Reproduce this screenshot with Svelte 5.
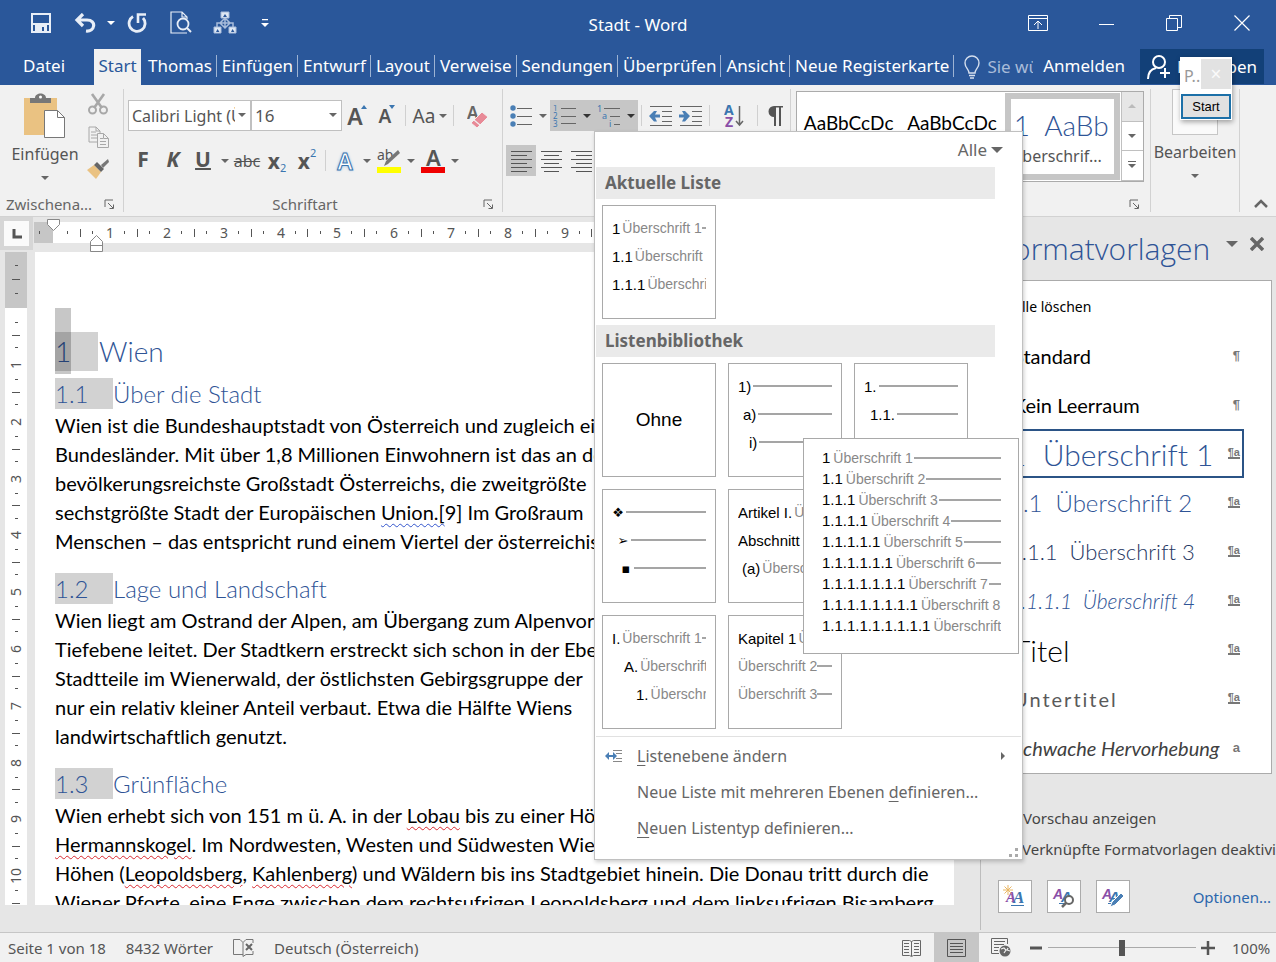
<script lang="ts">
  type Row = { num?: string; text?: string; indent?: number; glyph?: boolean };

  const tabs = ['Thomas', 'Einfügen', 'Entwurf', 'Layout', 'Verweise', 'Sendungen', 'Überprüfen', 'Ansicht', 'Neue Registerkarte'];

  const current: Row[] = [
    { num: '1', text: 'Überschrift 1' },
    { num: '1.1', text: 'Überschrift 2' },
    { num: '1.1.1', text: 'Überschrift 3' }
  ];

  const library: Row[][] = [
    [],
    [{ num: '1)' }, { num: 'a)', indent: 5 }, { num: 'i)', indent: 11 }],
    [{ num: '1.' }, { num: '1.1.', indent: 6 }, { num: '1.1.1.', indent: 14 }],
    [
      { num: '❖', glyph: true },
      { num: '➢', glyph: true, indent: 5 },
      { num: '▪', glyph: true, indent: 8 }
    ],
    [
      { num: 'Artikel I.', text: 'Überschrift 1' },
      { num: 'Abschnitt 1.01', text: 'Überschrift 2' },
      { num: '(a)', text: 'Überschrift 3', indent: 4 }
    ],
    [],
    [
      { num: 'I.', text: 'Überschrift 1' },
      { num: 'A.', text: 'Überschrift 2', indent: 12 },
      { num: '1.', text: 'Überschrift 3', indent: 24 }
    ],
    [{ num: 'Kapitel 1', text: 'Überschrift 1' }, { text: 'Überschrift 2' }, { text: 'Überschrift 3' }]
  ];

  const preview: Row[] = Array.from({ length: 9 }, (_, i) => ({
    num: Array(i + 1).fill('1').join('.'),
    text: `Überschrift ${i + 1}`
  }));

  const styles = [
    { name: 'Alle löschen', kind: 'clear', mark: '' },
    { name: 'Standard', kind: 'normal', mark: '¶' },
    { name: 'Kein Leerraum', kind: 'normal', mark: '¶' },
    { name: '1  Überschrift 1', kind: 'h1', mark: '¶a' },
    { name: '1.1  Überschrift 2', kind: 'h2', mark: '¶a' },
    { name: '1.1.1  Überschrift 3', kind: 'h3', mark: '¶a' },
    { name: '1.1.1.1  Überschrift 4', kind: 'h4', mark: '¶a' },
    { name: 'Titel', kind: 'title', mark: '¶a' },
    { name: 'Untertitel', kind: 'subtitle', mark: '¶a' },
    { name: 'Schwache Hervorhebung', kind: 'weak', mark: 'a' }
  ];

  const columns = Array.from({ length: 20 }, (_, i) => i + 1);
</script>

{#snippet rows(list: Row[])}
  {#each list as row}
    <span class="row" style="padding-left: {row.indent ?? 0}px">
      {#if row.num}<span class="num" class:glyph={row.glyph}>{row.num}</span>{/if}
      {#if row.text}<span class="lvl">{row.text}</span>{/if}
      <span class="rule"></span>
    </span>
  {/each}
{/snippet}

{#snippet launcher(label: string)}
  <button class="launcher" aria-label={label}>
    <svg width="11" height="11" viewBox="0 0 11 11"><path d="M1 8V1h8M4 4l5 5M9.500 5.500v4h-4" fill="none" stroke="#666" /></svg>
  </button>
{/snippet}

<div class="word">
  <header class="top">
    <div class="titlebar">
      <div class="quick">
        <button aria-label="Speichern">
          <svg width="20" height="20" viewBox="0 0 20 20"><path d="M1 1h18v18H1z" fill="none" stroke="#e8eef7" stroke-width="2" /><path d="M4 12h12v7h-3v-5h-2v5H4z" fill="#e8eef7" /><path d="M2 10h16v2H2z" fill="#e8eef7" /></svg>
        </button>
        <button aria-label="Rückgängig">
          <svg width="22" height="20" viewBox="0 0 22 20"><path d="M9 1L3 7l6 6M3 7h10c10 0 8 12-1 11" fill="none" stroke="#e8eef7" stroke-width="3.200" /></svg>
        </button>
        <button class="slim" aria-label="Rückgängig-Liste"><i class="caret light"></i></button>
        <button aria-label="Wiederholen">
          <svg width="20" height="20" viewBox="0 0 20 20"><path d="M6 3.500A8 8 0 1 0 16 5" fill="none" stroke="#e8eef7" stroke-width="2.800" /><path d="M11 10V1.500h8" fill="none" stroke="#e8eef7" stroke-width="2.600" /></svg>
        </button>
        <button aria-label="Seitenansicht">
          <svg width="22" height="23" viewBox="0 0 22 23" fill="none" stroke="#e8eef7"><path d="M17 22H1V1h11l5 5v2M12 1v5h5" stroke-width="1.200" /><circle cx="13" cy="13" r="5.500" stroke-width="1.800" /><path d="M17 17l4 4" stroke-width="2" /></svg>
        </button>
        <button aria-label="Organigramm">
          <svg width="24" height="24" viewBox="0 0 24 24" fill="none" stroke="#a9bddb"><path d="M12 7l5 5-5 5-5-5zM12 7v10M7 12h10M7 12H4v4M17 12h3v4" stroke-width="1.500" /><path d="M8 1h8v6H8zM1 16h7v6H1zM16 16h7v6h-7z" fill="#dfe8f4" /><path d="M10 6l2-3 2 3zM3 21l1.500-3 2 3zM18 21l1.500-3 2 3z" fill="#2a579a" stroke="none" /></svg>
        </button>
        <button class="tight" aria-label="Symbolleiste anpassen">
          <svg width="8" height="8" viewBox="0 0 8 8"><path d="M1 0h6v1.300H1zM0 4h8L4 8z" fill="#fff" /></svg>
        </button>
      </div>
      <div class="title">Stadt - Word</div>
      <div class="window">
        <button aria-label="Menüband-Anzeigeoptionen">
          <svg width="20" height="16" viewBox="0 0 20 16" fill="none" stroke="#fff"><path d="M.500.500h19v15H.500zM.500 3.500h19M10 14V6M6 10l4-4 4 4" /></svg>
        </button>
        <button aria-label="Minimieren"><svg width="15" height="16" viewBox="0 0 15 16"><path d="M0 9.500h15" stroke="#fff" /></svg></button>
        <button aria-label="Verkleinern">
          <svg width="16" height="16" viewBox="0 0 16 16" fill="none" stroke="#fff"><path d="M.500 3.500h11v12H.500zM3.500 3.500v-3h12v12h-4" /></svg>
        </button>
        <button aria-label="Schließen"><svg width="16" height="16" viewBox="0 0 16 16"><path d="M.500.500l15 15M15.500.500l-15 15" stroke="#fff" stroke-width="1.200" /></svg></button>
      </div>
    </div>

    <nav class="tabs">
      <button class="file">Datei</button>
      <button class="active">Start</button>
      {#each tabs as tab}
        <button class="tab">{tab}</button>
      {/each}
      <label class="tell">
        <svg width="18" height="24" viewBox="0 0 18 24" fill="none" stroke="#d5dfee" stroke-width="1.400"><path d="M6 18c0-4-4-5-4-10a7 7 0 0 1 14 0c0 5-4 6-4 10zM6 20.500h6M7 23h4" /></svg>
        <input aria-label="Was möchten Sie tun?" placeholder="Sie wünschen" />
      </label>
      <button class="login">Anmelden</button>
      <button class="share">
        <svg width="24" height="24" viewBox="0 0 24 24" fill="none" stroke="#fff" stroke-width="2"><circle cx="12" cy="7" r="6" /><path d="M1 24c0-6 3-10 8-11M18 13v10M13 18h10" /></svg>
        Freigeben
      </button>
    </nav>
  </header>

  <section class="ribbon">
    <div class="group">
      <div class="body clip">
        <button class="big">
          <svg width="44" height="46" viewBox="0 0 44 46"><path d="M1 5h33v37H1z" fill="#eac282" /><path d="M7 10V5h5c0-6 11-6 11 0h5v5z" fill="#777" /><circle cx="17.500" cy="4" r="1.500" fill="#fff" /><path d="M21.500 17.500h13l7 7v20h-20z" fill="#fff" stroke="#777" /><path d="M34.500 17.500v7h7" fill="none" stroke="#777" /></svg>
          <span>Einfügen</span>
          <i class="caret"></i>
        </button>
        <div class="stack">
          <button aria-label="Ausschneiden">
            <svg width="20" height="22" viewBox="0 0 20 22" fill="none" stroke="#a8a8a8" stroke-width="2"><path d="M4 1l10 14M16 1L6 15" stroke-width="2.600" /><circle cx="4.500" cy="17" r="3.500" /><circle cx="15.500" cy="17" r="3.500" /></svg>
          </button>
          <button aria-label="Kopieren">
            <svg width="21" height="22" viewBox="0 0 21 22" fill="#f1f1f1" stroke="#a8a8a8"><path d="M1 1h7l4 4v11H1zM8 1v4h4M3 6h5M3 9h6M3 12h6" /><path d="M9.500 7.500h6l5 5v9h-11zM15.500 7.500v5h5M12 12.500h3M12 15.500h6M12 18.500h6" /></svg>
          </button>
          <button aria-label="Format übertragen">
            <svg width="22" height="20" viewBox="0 0 22 20"><path d="M0 11l7-5 7 7-5 7z" fill="#eac282" /><path d="M7 6l3-3 7 7-3 3z" fill="#666" /><path d="M14 6l7-6 1 3-6 6z" fill="#777" /></svg>
          </button>
        </div>
      </div>
      <div class="caption"><span>Zwischena...</span>{@render launcher('Zwischenablage')}</div>
    </div>

    <div class="group">
      <div class="body">
        <div class="line">
          <span class="pick family">
            <select aria-label="Schriftart"><option>Calibri Light (Überschriften)</option></select>
            <i class="caret"></i>
          </span>
          <span class="pick size">
            <select aria-label="Schriftgrad"><option>16</option></select>
            <i class="caret"></i>
          </span>
          <button class="grow" aria-label="Schrift vergrößern">A<i class="up"></i></button>
          <button class="shrink" aria-label="Schrift verkleinern">A<i class="down"></i></button>
          <span class="sep"></span>
          <button class="wide case">Aa<i class="caret"></i></button>
          <span class="sep"></span>
          <button class="wide" aria-label="Formatierung löschen">
            <svg width="22" height="24" viewBox="0 0 22 24"><text x="0" y="15" font-size="17" fill="#666" font-family="Noto Sans" font-weight="600">A</text><path d="M4 19l11-11 6 5-11 11z" fill="#e88a97" stroke="#f1f1f1" /><path d="M7 16l6 5" stroke="#f1f1f1" stroke-width="1.200" /></svg>
          </button>
        </div>
        <div class="line">
          <button class="fmt"><b>F</b></button>
          <button class="fmt"><b><em>K</em></b></button>
          <button class="fmt"><b><u>U</u></b></button>
          <button class="drop" aria-label="Unterstreichung"><i class="caret"></i></button>
          <button class="strike"><s>abc</s></button>
          <button class="script"><b>x</b><sub>2</sub></button>
          <button class="script"><b>x</b><sup>2</sup></button>
          <span class="sep"></span>
          <button class="effect">A</button>
          <button class="drop" aria-label="Texteffekte"><i class="caret"></i></button>
          <button aria-label="Texthervorhebungsfarbe">
            <svg width="26" height="28" viewBox="0 0 26 28"><text x="1" y="13" font-size="14" fill="#555" font-family="Noto Sans">ab</text><path d="M8 19l2-5 12-11 2 3-12 11z" fill="#777" /><path d="M1 20h24v6H1z" fill="#ff0" /></svg>
          </button>
          <button class="drop" aria-label="Hervorhebungsfarben"><i class="caret"></i></button>
          <button aria-label="Schriftfarbe">
            <svg width="26" height="28" viewBox="0 0 26 28"><text x="6" y="19" font-size="22" fill="#555" font-family="Noto Sans" font-weight="600">A</text><path d="M1 20h24v6H1z" fill="#f00000" /></svg>
          </button>
          <button class="drop" aria-label="Schriftfarben"><i class="caret"></i></button>
        </div>
      </div>
      <div class="caption mid"><span>Schriftart</span>{@render launcher('Schriftart')}</div>
    </div>

    <div class="group para">
      <div class="body">
        <div class="line">
          <button aria-label="Aufzählungszeichen">
            <svg width="22" height="22" viewBox="0 0 22 22"><g fill="#4a7fb5"><circle cx="3" cy="3" r="2.700" /><circle cx="3" cy="11" r="2.700" /><circle cx="3" cy="19" r="2.700" /></g><path d="M7 3.500h15M7 11.500h15M7 19.500h15" stroke="#666" /></svg>
          </button>
          <button class="drop" aria-label="Aufzählungsbibliothek"><i class="caret"></i></button>
          <button class="on" aria-label="Nummerierung">
            <svg width="24" height="22" viewBox="0 0 24 22"><g font-size="8" fill="#3b76b0" font-family="Noto Sans"><text x="0" y="6">1</text><text x="0" y="14">2</text><text x="0" y="22">3</text></g><path d="M8 3.500h15M8 11.500h15M8 18.500h15" stroke="#666" /></svg>
          </button>
          <button class="drop on" aria-label="Nummerierungsbibliothek"><i class="caret dark"></i></button>
          <div class="anchor">
            <button class="on" aria-label="Liste mit mehreren Ebenen" aria-expanded="true">
              <svg width="24" height="22" viewBox="0 0 24 22"><g font-size="9" fill="#3b76b0" font-family="Noto Sans"><text x="0" y="7">1</text><text x="5" y="14">a</text><text x="12" y="22">i</text></g><path d="M7 3.500h16M13 11.500h10M17 19.500h6" stroke="#666" /></svg>
            </button>
            <button class="drop on" aria-label="Listenbibliothek"><i class="caret dark"></i></button>

            <div class="menu">
              <button class="all">Alle <i class="caret large"></i></button>
              <h3>Aktuelle Liste</h3>
              <div class="cards">
                <button class="card">{@render rows(current)}</button>
              </div>
              <h3>Listenbibliothek</h3>
              <div class="cards">
                {#each library as list, i}
                  {#if i === 5}
                    <span></span>
                  {:else if list.length}
                    <button class="card">{@render rows(list)}</button>
                  {:else}
                    <button class="card none">Ohne</button>
                  {/if}
                {/each}
              </div>
              <ul>
                <li>
                  <button>
                    <svg width="18" height="12" viewBox="0 0 18 12"><path d="M8 .500h9M11 3.500h6M11 8.500h6M8 11.500h9" stroke="#888" /><path d="M0 6l4-4v3h4V2l4 4-4 4V7H4v3z" fill="#4a7fb5" /></svg>
                    <span><u>L</u>istenebene ändern</span>
                    <i class="next"></i>
                  </button>
                </li>
                <li><button><span>Neue Liste mit mehreren Ebenen <u>d</u>efinieren...</span></button></li>
                <li><button><span><u>N</u>euen Listentyp definieren...</span></button></li>
              </ul>
              <svg class="grip" width="10" height="10" viewBox="0 0 10 10"><path d="M6 0h3v3H6zM0 6h3v3H0zM6 6h3v3H6z" fill="#aaa" /></svg>
              <div class="preview">{@render rows(preview)}</div>
            </div>
          </div>
          <span class="sep"></span>
          <button aria-label="Einzug verkleinern">
            <svg width="24" height="22" viewBox="0 0 24 22"><path d="M1 1.500h22M13 6.500h10M13 11.500h10M13 16.500h10M1 20.500h22" stroke="#666" /><path d="M11 9.500v3H6l2 4H5L0 11l5-5h3L6 9.500z" fill="#4a7fb5" /></svg>
          </button>
          <button aria-label="Einzug vergrößern">
            <svg width="24" height="22" viewBox="0 0 24 22"><path d="M1 1.500h22M13 6.500h10M13 11.500h10M13 16.500h10M1 20.500h22" stroke="#666" /><path d="M0 9.500v3h5l-2 4h3l5-5.500-5-5H3l2 3.500z" fill="#4a7fb5" /></svg>
          </button>
          <span class="sep"></span>
          <button class="wide" aria-label="Sortieren">
            <svg width="20" height="24" viewBox="0 0 20 24"><g font-size="14" font-weight="700" font-family="Noto Sans"><text x="0" y="11" fill="#3b76b0">A</text><text x="1" y="23" fill="#8a4fa8">Z</text></g><path d="M15.500 2v19M12 17l3.500 4 3.500-4" fill="none" stroke="#666" stroke-width="1.500" /></svg>
          </button>
          <span class="sep"></span>
          <button class="pilcrow" aria-label="Alle anzeigen">
            <svg width="17" height="22" viewBox="0 0 17 22"><path d="M8 12a5.500 5.500 0 0 1 0-11h9v1.500h-2V21h-2V2.500h-3V21H8z" fill="#555" /></svg>
          </button>
        </div>
        <div class="line">
          <button class="on" aria-label="Linksbündig"><svg width="21" height="22" viewBox="0 0 21 22"><path d="M0 1.500h21M0 5.500h16M0 9.500h21M0 13.500h16M0 17.500h21M0 21.500h16" stroke="#555" /></svg></button>
          <button aria-label="Zentriert"><svg width="21" height="22" viewBox="0 0 21 22"><path d="M0 1.500h21M3 5.500h15M0 9.500h21M3 13.500h15M0 17.500h21M3 21.500h15" stroke="#555" /></svg></button>
          <button aria-label="Rechtsbündig"><svg width="21" height="22" viewBox="0 0 21 22"><path d="M0 1.500h21M5 5.500h16M0 9.500h21M5 13.500h16M0 17.500h21M5 21.500h16" stroke="#555" /></svg></button>
        </div>
      </div>
    </div>

    <div class="group gallery-group">
      <div class="gallery">
        <button class="sample">AaBbCcDc</button>
        <button class="sample">AaBbCcDc</button>
        <button class="sample chosen"><span>1&nbsp; AaBb</span><small>Überschrif...</small></button>
        <div class="scroll">
          <button class="dim" aria-label="Nach oben"><i class="up"></i></button>
          <button aria-label="Nach unten"><i class="caret"></i></button>
          <button aria-label="Weitere"><i class="caret bar"></i></button>
        </div>
      </div>
      <div class="caption end">{@render launcher('Formatvorlagen')}</div>
    </div>

    <div class="group last">
      <button class="big edit">
        <span class="box"></span>
        <span>Bearbeiten</span>
        <i class="caret"></i>
      </button>
    </div>
    <button class="collapse" aria-label="Menüband reduzieren">
      <svg width="14" height="9" viewBox="0 0 14 9"><path d="M1 8l6-6 6 6" fill="none" stroke="#666" stroke-width="2.500" /></svg>
    </button>
  </section>

  <main class="work">
    <div class="editor">
      <button class="corner" aria-label="Tabstopp">
        <svg width="10" height="10" viewBox="0 0 10 10"><path d="M2 0v8h8" fill="none" stroke="#555" stroke-width="3" /></svg>
      </button>
      <div class="across">
        <div class="margin"><i></i></div>
        <div class="cells">
          {#each columns as n}
            <div class="cm"><i></i><i class="half"></i><i></i><span>{n}</span></div>
          {/each}
        </div>
        <svg class="first" width="13" height="12" viewBox="0 0 13 12"><path d="M.500.500h12v5l-6 6-6-6z" fill="#fff" stroke="#888" /></svg>
        <svg class="hang" width="13" height="17" viewBox="0 0 13 17"><path d="M.500 16.500v-10l6-6 6 6v10zM.500 10.500h12" fill="#fff" stroke="#888" /></svg>
      </div>
      <div class="down-ruler">
        <div class="margin"><i></i><i class="half"></i><i></i></div>
        {#each columns as n}
          <div class="cm"><i></i><i class="half"></i><i></i><span>{n}</span></div>
        {/each}
      </div>
      <article class="page">
        <h1><span class="mark">1</span>Wien</h1>
        <div class="caret-block"></div>
        <h2><span class="mark">1.1</span>Über die Stadt</h2>
        <p>
          Wien ist die Bundeshauptstadt von Österreich und zugleich eines<br />
          Bundesländer. Mit über 1,8 Millionen Einwohnern ist das an der<br />
          bevölkerungsreichste Großstadt Österreichs, die zweitgrößte<br />
          sechstgrößte Stadt der Europäischen <span class="grammar">Union.[</span>9] Im Großraum<br />
          Menschen – das entspricht rund einem Viertel der österreichischen
        </p>
        <h2><span class="mark">1.2</span>Lage und Landschaft</h2>
        <p>
          Wien liegt am Ostrand der Alpen, am Übergang zum Alpenvorland<br />
          Tiefebene leitet. Der Stadtkern erstreckt sich schon in der Ebene<br />
          Stadtteile im Wienerwald, der östlichsten Gebirgsgruppe der<br />
          nur ein relativ kleiner Anteil verbaut. Etwa die Hälfte Wiens<br />
          landwirtschaftlich genutzt.
        </p>
        <h2><span class="mark">1.3</span>Grünfläche</h2>
        <p>
          Wien erhebt sich von 151 m ü. A. in der <span class="spell">Lobau</span> bis zu einer Höhe<br />
          <span class="spell">Hermannskogel</span>. Im Nordwesten, Westen und Südwesten Wiens<br />
          Höhen (<span class="spell">Leopoldsberg</span>, <span class="spell">Kahlenberg</span>) und Wäldern bis ins Stadtgebiet hinein. Die Donau tritt durch die<br />
          Wiener Pforte, eine Enge zwischen dem rechtsufrigen Leopoldsberg und dem linksufrigen Bisamberg
        </p>
      </article>
    </div>

    <aside class="pane">
      <div class="pane-head">
        <h2>Formatvorlagen</h2>
        <button aria-label="Aufgabenbereichsoptionen"><i class="caret large"></i></button>
        <button aria-label="Bereich schließen"><svg width="14" height="14" viewBox="0 0 14 14"><path d="M1 1l12 12M13 1L1 13" stroke="#666" stroke-width="3.500" /></svg></button>
      </div>
      <ul class="styles">
        {#each styles as style}
          <li class={style.kind}>
            <button><span class="name">{style.name}</span><span class="type" class:linked={style.mark === '¶a'}>{style.mark}</span></button>
          </li>
        {/each}
      </ul>
      <label class="check"><input type="checkbox" checked />Vorschau anzeigen</label>
      <label class="check"><input type="checkbox" />Verknüpfte Formatvorlagen deaktivieren</label>
      <div class="pane-foot">
        <button aria-label="Neue Formatvorlage">
          <svg width="24" height="24" viewBox="0 0 24 24"><g font-family="Liberation Serif" font-style="italic" font-weight="700"><text x="3" y="17" font-size="15" fill="#8a4fa8">A</text><text x="10" y="18" font-size="17" fill="#3b76b0">A</text></g><path d="M8 20.500h13" stroke="#3b76b0" /><path d="M5 0v10M0 5h10M1.500 1.500l7 7M8.500 1.500l-7 7" stroke="#eab765" /></svg>
        </button>
        <button aria-label="Formatinspektor">
          <svg width="24" height="24" viewBox="0 0 24 24"><g font-family="Liberation Sans" font-style="italic" font-weight="700"><text x="1" y="14" font-size="14" fill="#8a4fa8">A</text><text x="9" y="17" font-size="15" fill="#3b76b0">A</text></g><path d="M7 18.500h8" stroke="#3b76b0" /><circle cx="17" cy="15" r="4" fill="#fff" stroke="#666" stroke-width="2" /><path d="M14 18l-4 4" stroke="#666" stroke-width="2.500" /></svg>
        </button>
        <button aria-label="Formatvorlagen verwalten">
          <svg width="24" height="24" viewBox="0 0 24 24"><g font-family="Liberation Sans" font-style="italic" font-weight="700"><text x="1" y="14" font-size="14" fill="#8a4fa8">A</text><text x="8" y="17" font-size="15" fill="#3b76b0">A</text></g><path d="M7 18.500h5" stroke="#3b76b0" /><path d="M9 22l2-5 9-9 3 3-9 9z" fill="#4a7fb5" stroke="#fff" /></svg>
        </button>
        <a href="#optionen">Optionen...</a>
      </div>
    </aside>
  </main>

  <footer class="status">
    <span>Seite 1 von 18</span>
    <span>8432 Wörter</span>
    <svg width="21" height="19" viewBox="0 0 21 19" fill="none" stroke="#777"><path d="M10 16.500H.500V1.500H7l3 3v14M10 4.500l3-3h7V5M20 13v3.500h-7l-3 2" /><path d="M13 6l6 6M19 6l-6 6" stroke="#666" stroke-width="2" /></svg>
    <span>Deutsch (Österreich)</span>
    <div class="views">
      <button aria-label="Lesemodus"><svg width="20" height="18" viewBox="0 0 20 18" fill="none" stroke="#666"><path d="M9.500 2.500l-2-1H.500v15h7l2 1 2-1h7v-15h-7zV17M2 4.500h5M2 7.500h5M2 10.500h5M2 13.500h5M12 4.500h5M12 7.500h5M12 10.500h5M12 13.500h5" /></svg></button>
      <button class="on" aria-label="Drucklayout"><svg width="20" height="18" viewBox="0 0 20 18" fill="none" stroke="#555"><path d="M.500.500h18v17H.500zM3 4.500h13M3 7.500h13M3 10.500h13M3 13.500h13" /></svg></button>
      <button aria-label="Weblayout"><svg width="21" height="19" viewBox="0 0 21 19" fill="none" stroke="#666"><path d="M16.500 6V.500H.500v15H8M3 3.500h11M3 6.500h10M3 9.500h5M3 12.500h4" /><circle cx="14" cy="13" r="5.500" fill="#666" stroke="none" /><path d="M10 11l3-1 2 2-2 3M17 10l-1 2 3 1" stroke="#eee" stroke-width="1.200" /></svg></button>
      <button class="zoom" aria-label="Verkleinern"><svg width="12" height="12" viewBox="0 0 12 12"><path d="M0 6h12" stroke="#555" stroke-width="3" /></svg></button>
      <input type="range" aria-label="Zoom" min="0" max="100" value="50" />
      <button class="zoom" aria-label="Vergrößern"><svg width="14" height="14" viewBox="0 0 14 14"><path d="M0 7h14M7 0v14" stroke="#555" stroke-width="2.500" /></svg></button>
      <span class="percent">100%</span>
    </div>
  </footer>

  <div class="float">
    <div class="float-head"><span>P..</span><button aria-label="Fenster schließen">×</button></div>
    <button class="run">Start</button>
  </div>
</div>

<style>
  :global(body) {
    margin: 0;
  }

  .word {
    position: relative;
    display: flex;
    flex-direction: column;
    height: 100vh;
    overflow: hidden;
    background: #e6e6e6;
    color: #555;
    font-family: 'Noto Sans', sans-serif;
    font-size: 16px;
  }

  button {
    display: flex;
    align-items: center;
    justify-content: center;
    box-sizing: border-box;
    padding: 0;
    border: 0;
    background: none;
    color: inherit;
    font: inherit;
    white-space: nowrap;
  }

  svg {
    display: block;
    flex: none;
  }

  .caret,
  .down {
    flex: none;
    width: 0;
    border: 4px solid transparent;
    border-top-color: #666;
    border-bottom: 0;
  }

  .caret.light {
    border-top-color: #fff;
  }

  .caret.dark {
    border-top-color: #333;
  }

  .caret.large {
    border-width: 6px 6px 0;
  }

  .caret.bar {
    position: relative;
  }

  .caret.bar::before {
    content: '';
    position: absolute;
    top: -7px;
    left: -4px;
    width: 8px;
    height: 1px;
    background: #666;
  }

  .up {
    width: 0;
    border: 4px solid transparent;
    border-bottom-color: #bbb;
    border-top: 0;
  }

  /* title bar and tabs */
  .top {
    background: #2a579a;
    color: #fff;
  }

  .titlebar {
    display: grid;
    grid-template-columns: 1fr auto 1fr;
    height: 49px;
  }

  .quick {
    display: flex;
    align-items: center;
    padding: 0 0 4px 19px;
  }

  .quick button {
    width: 44px;
  }

  .quick .slim {
    width: 8px;
  }

  .quick .tight {
    width: 36px;
  }

  .title {
    align-self: center;
    font-size: 17px;
  }

  .window {
    display: flex;
    justify-content: flex-end;
    padding-bottom: 4px;
  }

  .window button {
    width: 68px;
  }

  .tabs {
    display: flex;
    height: 36px;
    font-size: 17px;
    line-height: 34px;
  }

  .tabs > button {
    align-items: flex-start;
  }

  .file {
    width: 88px;
    margin-right: 6px;
  }

  .active {
    width: 47px;
    margin-right: 2px;
    background: #f1f1f1;
    color: #2a579a;
  }

  .tab {
    position: relative;
    padding: 0 5px;
  }

  .tab::after {
    content: '';
    position: absolute;
    top: 6px;
    right: 0;
    width: 1px;
    height: 22px;
    background: #9db3d3;
  }

  .tell {
    display: flex;
    flex: 1;
    align-items: center;
    gap: 6px;
    min-width: 0;
    padding: 0 10px 0 9px;
  }

  .tell input {
    width: 100%;
    min-width: 0;
    padding: 0;
    border: 0;
    background: none;
    font: inherit;
  }

  .tell input::placeholder {
    color: #a9bcd9;
    opacity: 1;
  }

  .tabs .share {
    align-items: center;
    width: 124px;
    height: 35px;
    margin: 0 12px 0 15px;
    gap: 6px;
    background: #124078;
  }

  /* ribbon */
  .ribbon {
    display: flex;
    height: 131px;
    border-bottom: 1px solid #d2d2d2;
    background: #f1f1f1;
  }

  .group {
    display: flex;
    flex: none;
    flex-direction: column;
    box-sizing: border-box;
    margin: 4px 0;
    padding: 0 4px;
    border-right: 1px solid #d2d2d2;
  }

  .body {
    flex: 1;
    padding-top: 11px;
  }

  .clip {
    display: flex;
    padding-top: 4px;
  }

  .big {
    flex-direction: column;
    justify-content: flex-start;
    width: 82px;
    font-size: 16px;
  }

  .big .caret {
    margin-top: 7px;
  }

  .big span {
    line-height: 30px;
  }

  .stack {
    display: flex;
    flex-direction: column;
    gap: 2px;
    padding-right: 9px;
  }

  .stack button {
    width: 24px;
    height: 31px;
    align-items: flex-start;
  }

  .caption {
    display: flex;
    align-items: center;
    justify-content: space-between;
    height: 16px;
    padding: 0 2px;
    font-size: 15px;
    line-height: 16px;
    color: #666;
  }

  .caption.mid span {
    flex: 1;
    text-align: center;
  }

  .caption.end {
    justify-content: flex-end;
  }

  .launcher {
    width: 16px;
  }

  .line {
    display: flex;
    height: 31px;
    margin-bottom: 14px;
  }

  .line button {
    width: 30px;
  }

  .line .drop {
    width: 14px;
  }

  .line .wide {
    width: 40px;
  }

  .line .pilcrow {
    width: 24px;
  }

  .on,
  .line .on {
    background: #c6c6c6;
  }

  .sep {
    width: 1px;
    height: 21px;
    margin: 5px 4px 5px 3px;
    background: #d0d0d0;
  }

  .pick {
    position: relative;
    box-sizing: border-box;
    border: 1px solid #c0c0c0;
    background: #fff;
  }

  .family {
    width: 123px;
  }

  .size {
    width: 91px;
  }

  .pick select {
    appearance: none;
    width: 100%;
    height: 100%;
    padding: 0 15px 0 3px;
    border: 0;
    background: none;
    color: #555;
    font: inherit;
    font-size: 17px;
  }

  .family select {
    font-size: 16px;
  }

  .pick .caret {
    position: absolute;
    top: 12px;
    right: 4px;
  }

  .grow,
  .shrink {
    position: relative;
    font-size: 23px;
    font-weight: 600;
    align-items: flex-end;
    line-height: 29px;
  }

  .shrink {
    font-size: 19px;
  }

  .grow .up,
  .shrink .down {
    align-self: flex-start;
    margin: 5px 0 0 -2px;
    border-width: 0 3px 4px;
    border-bottom-color: #3b76b0;
  }

  .shrink .down {
    border-width: 4px 3px 0;
    border-top-color: #3b76b0;
  }

  .case {
    gap: 4px;
    font-size: 19px;
  }

  .fmt {
    font-size: 21px;
    line-height: 28px;
    align-items: flex-start;
  }

  .fmt u {
    text-decoration-thickness: 2px;
  }

  .strike {
    font-size: 16px;
  }

  .script {
    font-size: 21px;
    line-height: 28px;
  }

  .script sub,
  .script sup {
    color: #3b76b0;
    font-size: 11px;
    line-height: 16px;
  }

  .script sub {
    align-self: flex-end;
  }

  .script sup {
    align-self: flex-start;
  }

  .effect {
    color: #fff;
    font-size: 23px;
    font-weight: 600;
    line-height: 28px;
    -webkit-text-stroke: 1px #3b76b0;
    text-shadow: 0 0 3px #6ea6dd;
  }

  .para {
    width: 288px;
    padding: 0 3px;
  }

  .anchor {
    position: relative;
    z-index: 2;
    display: flex;
  }

  /* list menu */
  .menu {
    position: absolute;
    top: 100%;
    left: 0;
    box-sizing: border-box;
    width: 429px;
    padding: 0 1px;
    border: 1px solid #c0c0c0;
    background: #fff;
    box-shadow: 1px 2px 4px rgba(0, 0, 0, 0.2);
  }

  .menu button {
    width: auto;
  }

  .menu .all {
    height: 35px;
    gap: 4px;
    margin: 0 18px 0 auto;
    color: #666;
    font-size: 17px;
  }

  .menu h3 {
    margin: 0 26px 0 0;
    padding-left: 9px;
    background: #eaeaea;
    color: #666;
    font-size: 17px;
    line-height: 32px;
  }

  .cards {
    display: grid;
    grid-template-columns: repeat(3, 114px);
    gap: 12px;
    padding: 6px;
  }

  .menu .card {
    flex-direction: column;
    align-items: stretch;
    justify-content: flex-start;
    height: 114px;
    padding: 8px 9px 0;
    border: 1px solid #a9a9a9;
  }

  .menu .none {
    align-items: center;
    justify-content: center;
    padding: 0;
    color: #000;
    font-family: 'Liberation Sans', sans-serif;
    font-size: 19px;
  }

  .row {
    display: flex;
    flex: none;
    align-items: center;
    overflow: hidden;
    height: 28px;
    gap: 2px;
    font-family: 'Liberation Sans', sans-serif;
    white-space: nowrap;
  }

  .num {
    color: #000;
    font-size: 15px;
  }

  .glyph {
    width: 12px;
    font-family: 'DejaVu Sans', sans-serif;
    font-size: 13px;
    text-align: center;
  }

  .lvl {
    margin-right: -2px;
    color: #888;
    font-size: 14px;
  }

  .rule {
    flex: 1;
    height: 2px;
    background: #a5a5a5;
  }

  .menu ul {
    margin: 1px 0 0;
    padding: 1px 0 13px;
    border-top: 1px solid #e1e1e1;
    list-style: none;
  }

  .menu li button {
    display: grid;
    grid-template-columns: 32px 1fr 20px;
    width: 100%;
    height: 36px;
    padding-left: 9px;
    color: #666;
    font-size: 16px;
    text-align: left;
  }

  .menu li span {
    grid-column: 2;
  }

  .menu u {
    text-underline-offset: 3px;
  }

  .next {
    width: 0;
    border: 4px solid transparent;
    border-left-color: #666;
    border-right: 0;
  }

  .grip {
    position: absolute;
    right: 3px;
    bottom: 1px;
  }

  .preview {
    position: absolute;
    top: 306px;
    right: 3px;
    box-sizing: border-box;
    width: 216px;
    height: 216px;
    padding: 8px 17px 0 18px;
    border: 1px solid #a9a9a9;
    background: #fff;
  }

  .preview .row {
    height: 21px;
    gap: 3px;
  }

  /* style gallery */
  .gallery-group {
    flex: 1;
    justify-content: space-between;
    padding: 2px 6px 0 5px;
  }

  .gallery {
    display: flex;
    box-sizing: border-box;
    height: 91px;
    border: 1px solid #ababab;
    background: #fff;
  }

  .sample {
    flex: 1;
    flex-direction: column;
    overflow: hidden;
    min-width: 0;
    padding-bottom: 28px;
    color: #000;
    font-family: Lato, sans-serif;
    font-size: 19px;
  }

  .chosen {
    align-items: flex-start;
    margin: 1px;
    padding: 0 0 2px;
    border: 6px solid #c6c6c6;
    color: #2f5496;
    font-size: 28px;
    font-weight: 300;
  }

  .chosen span {
    padding-left: 3px;
    line-height: 40px;
  }

  .chosen small {
    color: #555;
    font-family: 'Noto Sans', sans-serif;
    font-size: 16px;
    font-weight: 400;
  }

  .scroll {
    display: flex;
    flex: none;
    flex-direction: column;
    width: 21px;
    border-left: 1px solid #c0c0c0;
  }

  .scroll button {
    flex: 1;
    border-bottom: 1px solid #c0c0c0;
  }

  .scroll .dim {
    background: #e6e6e6;
  }

  .last {
    padding: 0 3px;
  }

  .edit .box {
    box-sizing: border-box;
    width: 46px;
    height: 46px;
    margin-bottom: 2px;
    border: 1px solid #c6c6c6;
    background: #fafafa;
  }

  .collapse {
    align-self: flex-end;
    flex: none;
    width: 36px;
    padding: 0 0 8px 6px;
  }

  /* work area */
  .work {
    display: flex;
    flex: 1;
    min-height: 0;
  }

  .editor {
    display: grid;
    flex: 1;
    grid-template-columns: 35px minmax(0, 1fr);
    grid-template-rows: 35px minmax(0, 1fr);
    padding: 0 26px 27px 0;
    min-width: 0;
  }

  .corner {
    width: 33px;
    height: 33px;
    border: 4px solid #d6d6d6;
    background: #fafafa;
  }

  .across {
    position: relative;
    display: flex;
    height: 21px;
    margin: 5px 0 0 -1px;
    background: #fff;
    font-size: 14px;
  }

  .across .margin {
    display: flex;
    flex: none;
    align-items: center;
    width: 14px;
    padding-left: 5px;
    background: #c6c6c6;
  }

  .cells {
    display: flex;
    flex: 1;
    overflow: hidden;
  }

  .cm {
    display: flex;
    flex: none;
    align-items: center;
    justify-content: space-between;
    width: 57px;
    box-sizing: border-box;
    padding-left: 14px;
  }

  .cm:nth-child(5n) {
    width: 56px;
  }

  .cm span {
    width: 18px;
    margin: 0 -9px 0 -4px;
    text-align: center;
  }

  .across i {
    width: 1px;
    height: 3px;
    background: #555;
  }

  .across .half {
    height: 8px;
  }

  .first,
  .hang {
    position: absolute;
    top: -3px;
    left: 13px;
  }

  .hang {
    top: 13px;
    left: 56px;
  }

  .down-ruler {
    display: flex;
    flex-direction: column;
    align-items: center;
    overflow: hidden;
    width: 22px;
    margin-left: 5px;
    background: #fff;
    font-size: 14px;
  }

  .down-ruler .margin {
    display: flex;
    flex: none;
    flex-direction: column;
    align-items: center;
    justify-content: space-between;
    box-sizing: border-box;
    width: 22px;
    height: 56px;
    padding: 13px 0 14px;
    background: #c6c6c6;
  }

  .down-ruler .cm {
    flex-direction: column;
    width: 22px;
    height: 57px;
    padding: 14px 0 0;
  }

  .down-ruler .cm:nth-child(5n) {
    height: 56px;
  }

  .down-ruler .cm span {
    width: 18px;
    height: 18px;
    margin: -4px 0 -9px;
    line-height: 18px;
    transform: rotate(-90deg);
  }

  .down-ruler i {
    width: 3px;
    height: 1px;
    background: #555;
  }

  .down-ruler .half {
    width: 8px;
  }

  .page {
    position: relative;
    overflow: hidden;
    padding: 80px 0 0 20px;
    background: #fff;
    color: #000;
    font-family: Lato, sans-serif;
    font-size: 20px;
    line-height: 29px;
    white-space: nowrap;
    font-variant-ligatures: none;
  }

  .page h1,
  .page h2 {
    display: flex;
    margin: 0 0 7px;
    color: #2f5496;
    font-size: 28px;
    font-weight: 300;
    line-height: 39px;
  }

  .page h2 {
    margin: 17px 0 2px;
    font-size: 24px;
    line-height: 31px;
  }

  .page .caret-block + h2 {
    margin-top: 0;
  }

  .page p {
    margin: 0;
  }

  .mark {
    width: 58px;
    background: #d2d2d2;
  }

  h1 .mark {
    width: 43px;
    margin-right: 1px;
  }

  .caret-block {
    position: absolute;
    top: 56px;
    left: 20px;
    width: 16px;
    height: 66px;
    background: rgba(0, 0, 0, 0.22);
  }

  .spell {
    text-decoration: underline wavy #d8282f 1px;
    text-underline-offset: 3px;
  }

  .grammar {
    text-decoration: underline wavy #3355cc 1px;
    text-underline-offset: 3px;
  }

  /* styles pane */
  .pane {
    display: flex;
    flex: none;
    flex-direction: column;
    box-sizing: border-box;
    width: 296px;
    margin-bottom: 2px;
    border-left: 1px solid #bdbdbd;
    font-size: 15px;
  }

  .pane-head {
    display: flex;
    gap: 12px;
    height: 63px;
    padding: 0 12px 0 17px;
  }

  .pane-head h2 {
    flex: 1;
    margin: 0;
    color: #2f5496;
    font-family: 'Open Sans', sans-serif;
    font-size: 30px;
    font-weight: 300;
    line-height: 64px;
  }

  .pane-head button {
    height: 53px;
  }

  .styles {
    margin: 0 4px 28px 9px;
    padding: 1px 27px 1px 0;
    border: 1px solid #ababab;
    background: #fff;
    list-style: none;
  }

  .styles button {
    justify-content: space-between;
    overflow: hidden;
    width: 100%;
    height: 49px;
    padding: 0 2px 0 16px;
    border: 2px solid transparent;
    color: #000;
    font-family: Lato, sans-serif;
    font-size: 20px;
    font-variant-ligatures: none;
  }

  .styles .name {
    overflow: hidden;
    white-space: pre;
  }

  .styles .type {
    flex: none;
    padding-left: 4px;
    color: #777;
    font-family: 'Liberation Sans', sans-serif;
    font-size: 13px;
    font-style: normal;
    font-weight: 700;
    line-height: 12px;
  }

  .styles .linked {
    margin-left: 4px;
    padding-left: 0;
    border-bottom: 2px solid #777;
    font-size: 11px;
    line-height: 9px;
  }

  .styles .clear button {
    padding-left: 20px;
    font-family: 'Noto Sans', sans-serif;
    font-size: 14px;
  }

  .styles .normal button {
    padding-left: 20px;
  }

  .styles .h1 button {
    border-color: #2b5486;
    color: #2f5496;
    font-size: 30px;
    font-weight: 300;
  }

  .styles .h2 button,
  .styles .h3 button,
  .styles .h4 button {
    color: #2f5496;
    font-size: 24px;
    font-weight: 300;
  }

  .styles .h3 button {
    color: #1f3763;
    font-size: 22px;
  }

  .styles .h4 button {
    font-size: 21px;
    font-style: italic;
  }

  .styles .title button {
    padding-left: 20px;
    font-size: 30px;
    font-weight: 300;
  }

  .styles .subtitle button,
  .styles .weak button {
    padding-left: 20px;
  }

  .styles .subtitle .name {
    color: #5a5a5a;
    letter-spacing: 2px;
  }

  .styles .weak button {
    color: #404040;
    font-style: italic;
  }

  .check {
    display: flex;
    align-items: center;
    overflow: hidden;
    height: 31px;
    padding-left: 18px;
    color: #444;
    white-space: nowrap;
  }

  .check input {
    width: 14px;
    height: 14px;
    margin: 0 10px 0 0;
  }

  .pane-foot {
    display: flex;
    align-items: center;
    gap: 15px;
    margin-top: auto;
    padding: 0 5px 17px 17px;
  }

  .pane-foot button {
    width: 34px;
    height: 33px;
    border: 1px solid #ababab;
    background: #fff;
  }

  .pane-foot a {
    margin-left: auto;
    color: #2b66ad;
    text-decoration: none;
  }

  /* status bar */
  .status {
    display: flex;
    flex: none;
    align-items: center;
    gap: 20px;
    height: 29px;
    padding: 0 4px 0 8px;
    border-top: 1px solid #c6c6c6;
    background: #f1f1f1;
    font-size: 15px;
  }

  .views {
    display: flex;
    align-items: center;
    align-self: stretch;
    margin-left: auto;
  }

  .views button {
    width: 45px;
    height: 29px;
  }

  .views .zoom {
    width: 24px;
  }

  .views input {
    appearance: none;
    width: 148px;
    height: 16px;
    margin: 0;
    background: linear-gradient(#aaa, #aaa) center / 100% 1px no-repeat;
  }

  .views input::-webkit-slider-thumb {
    appearance: none;
    width: 6px;
    height: 16px;
    background: #555;
  }

  .percent {
    width: 40px;
    margin-left: 12px;
  }

  /* small tool window over everything */
  .float {
    position: absolute;
    top: 57px;
    right: 44px;
    z-index: 3;
    width: 52px;
    padding-bottom: 1px;
    background: #fff;
    box-shadow: 1px 2px 5px rgba(0, 0, 0, 0.35);
  }

  .float-head {
    display: flex;
    justify-content: space-between;
    padding: 2px 1px 5px 4px;
    color: #999;
  }

  .float-head span {
    height: 30px;
    line-height: 34px;
  }

  .float-head button {
    width: 30px;
    height: 30px;
    background: #e2e2e2;
    color: #fafafa;
    font-size: 19px;
  }

  .run {
    width: 50px;
    height: 25px;
    margin: 0 1px;
    border: 2px solid #1c70a8;
    background: #e1e1e1;
    color: #000;
    font-family: 'Liberation Sans', sans-serif;
    font-size: 13px;
  }
</style>
